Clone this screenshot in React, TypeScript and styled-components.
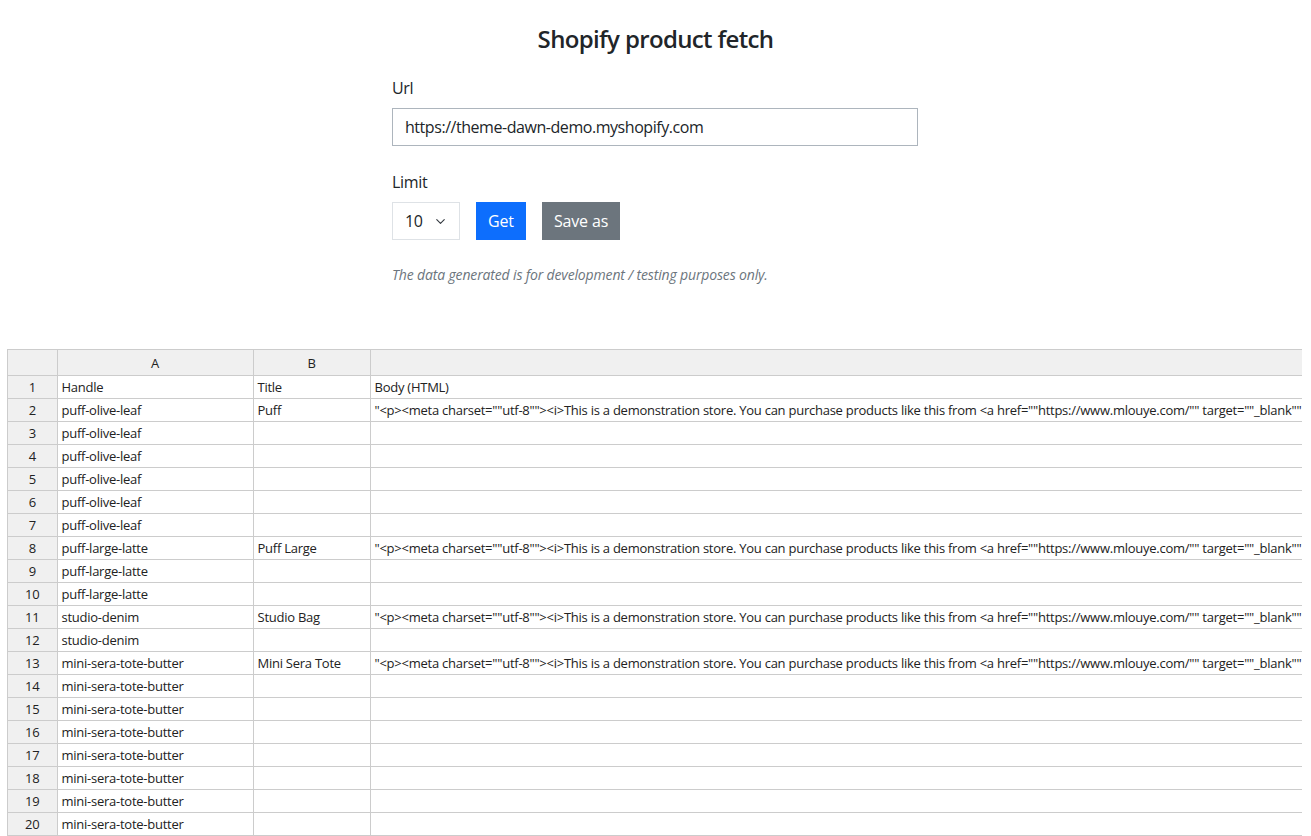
import React from "react";
import styled, { createGlobalStyle } from "styled-components";
import { ChevronDown } from "lucide-react";

const FONT = `"Open Sans", "Noto Sans", "Liberation Sans", sans-serif`;

const Global = createGlobalStyle`
  html, body { margin: 0; padding: 0; background: #fff; }
  body { font-family: ${FONT}; color: #212529; overflow: hidden; }
  * { box-sizing: border-box; }
`;

const Page = styled.div`
  padding: 0 8px;
  display: flex;
  flex-direction: column;
`;

const FormArea = styled.div`
  width: 527px;
  margin: 0 auto;
  padding-top: 24px;
  display: flex;
  flex-direction: column;
`;

const Title = styled.h1`
  margin: 0 0 23px;
  font-size: 24px;
  font-weight: 600;
  line-height: 29px;
  letter-spacing: -0.65px;
  text-align: center;
  color: #212529;
`;

const Label = styled.label`
  font-size: 16px;
  line-height: 24px;
  letter-spacing: -0.3px;
  margin-bottom: 8px;
`;

const TextInput = styled.input`
  height: 38px;
  width: 526px;
  padding: 0 12px;
  font-family: ${FONT};
  font-size: 16px;
  letter-spacing: -0.45px;
  color: #212529;
  border: 1px solid #adb5bd;
  border-radius: 0;
  outline: none;
  margin-bottom: 24px;
`;

const Controls = styled.div`
  display: flex;
  gap: 16px;
  align-items: stretch;
  height: 38px;
`;

const SelectBox = styled.div`
  width: 68px;
  height: 38px;
  border: 1px solid #dee2e6;
  display: flex;
  align-items: center;
  padding-left: 12px;
  gap: 10px;
  font-size: 16px;
  letter-spacing: -0.3px;
  color: #212529;
`;

const Button = styled.button<{ $variant: "primary" | "secondary" }>`
  height: 38px;
  padding: 0 12px;
  border: none;
  border-radius: 0;
  font-family: ${FONT};
  font-size: 16px;
  letter-spacing: -0.15px;
  color: #fff;
  background: ${(p) => (p.$variant === "primary" ? "#0d6efd" : "#6c757d")};
`;

const Note = styled.p`
  margin: 24px 0 0;
  font-size: 14px;
  line-height: 21px;
  letter-spacing: -0.15px;
  font-style: italic;
  color: #6c757d;
`;

const SheetWrap = styled.div`
  margin-top: 64px;
  width: 100%;
  overflow: hidden;
  border-left: 1px solid #ccc;
  margin-left: -1px;
`;

const Sheet = styled.table`
  border-collapse: collapse;
  table-layout: fixed;
  width: 2400px;
  font-family: ${FONT};
  font-size: 13px;
  letter-spacing: -0.25px;
  color: #222;
`;

const HeadCell = styled.th`
  height: 26px;
  background: #f0f0f0;
  border: 1px solid #ccc;
  border-left: none;
  font-weight: 400;
  text-align: center;
  padding: 0;
  color: #222;
`;

const RowNum = styled.td`
  height: 23px;
  background: #f0f0f0;
  border: 1px solid #ccc;
  border-left: none;
  text-align: center;
  padding: 0;
`;

const Cell = styled.td`
  height: 23px;
  border: 1px solid #ccc;
  padding: 0 4px;
  white-space: nowrap;
  overflow: hidden;
`;

const BODY =
  '"<p><meta charset=""utf-8""><i>This is a demonstration store. You can purchase products like this from <a href=""https://www.mlouye.com/"" target=""_blank"" title=""MLOUYE"">MLOUYE</a>.</i></p>"';

const rows: [string, string, string][] = [
  ["Handle", "Title", "Body (HTML)"],
  ["puff-olive-leaf", "Puff", BODY],
  ["puff-olive-leaf", "", ""],
  ["puff-olive-leaf", "", ""],
  ["puff-olive-leaf", "", ""],
  ["puff-olive-leaf", "", ""],
  ["puff-olive-leaf", "", ""],
  ["puff-large-latte", "Puff Large", BODY],
  ["puff-large-latte", "", ""],
  ["puff-large-latte", "", ""],
  ["studio-denim", "Studio Bag", BODY],
  ["studio-denim", "", ""],
  ["mini-sera-tote-butter", "Mini Sera Tote", BODY],
  ["mini-sera-tote-butter", "", ""],
  ["mini-sera-tote-butter", "", ""],
  ["mini-sera-tote-butter", "", ""],
  ["mini-sera-tote-butter", "", ""],
  ["mini-sera-tote-butter", "", ""],
  ["mini-sera-tote-butter", "", ""],
  ["mini-sera-tote-butter", "", ""],
];

export default function App() {
  return (
    <>
      <Global />
      <Page>
        <FormArea>
          <Title>Shopify product fetch</Title>
          <Label htmlFor="url">Url</Label>
          <TextInput id="url" defaultValue="https://theme-dawn-demo.myshopify.com" />
          <Label>Limit</Label>
          <Controls>
            <SelectBox>
              <span>10</span>
              <ChevronDown size={15} strokeWidth={1.8} color="#343a40" />
            </SelectBox>
            <Button $variant="primary">Get</Button>
            <Button $variant="secondary">Save as</Button>
          </Controls>
          <Note>The data generated is for development / testing purposes only.</Note>
        </FormArea>
        <SheetWrap>
          <Sheet>
            <colgroup>
              <col style={{ width: 49 }} />
              <col style={{ width: 196 }} />
              <col style={{ width: 117 }} />
              <col style={{ width: 2038 }} />
            </colgroup>
            <thead>
              <tr>
                <HeadCell />
                <HeadCell>A</HeadCell>
                <HeadCell>B</HeadCell>
                <HeadCell>C</HeadCell>
              </tr>
            </thead>
            <tbody>
              {rows.map((r, i) => (
                <tr key={i}>
                  <RowNum>{i + 1}</RowNum>
                  <Cell>{r[0]}</Cell>
                  <Cell>{r[1]}</Cell>
                  <Cell>{r[2]}</Cell>
                </tr>
              ))}
            </tbody>
          </Sheet>
        </SheetWrap>
      </Page>
    </>
  );
}
